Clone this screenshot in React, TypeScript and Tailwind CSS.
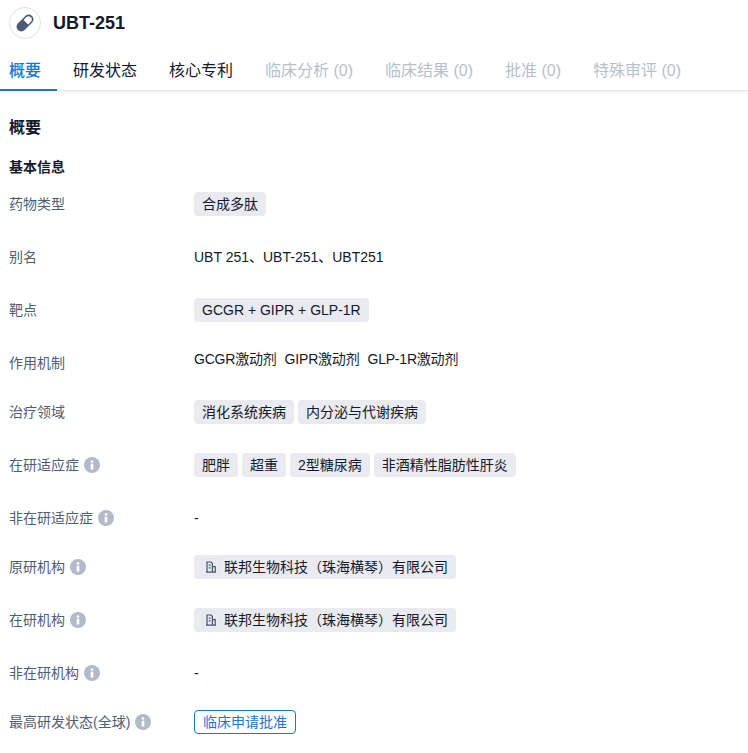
import React from 'react';

const FONT = "font-['Liberation_Sans','Noto_Sans_CJK_SC',sans-serif]";

const tabs = [
  { label: '概要', active: true },
  { label: '研发状态' },
  { label: '核心专利' },
  { label: '临床分析 (0)', disabled: true },
  { label: '临床结果 (0)', disabled: true },
  { label: '批准 (0)', disabled: true },
  { label: '特殊审评 (0)', disabled: true },
];

const InfoIcon = () => (
  <svg width="16" height="16" viewBox="0 0 16 16" className="shrink-0">
    <circle cx="8" cy="8" r="8" fill="#b3bac8" />
    <rect x="6.7" y="3.3" width="2.6" height="2.4" rx="1" fill="#fff" />
    <rect x="6.7" y="6.8" width="2.6" height="5.8" rx="0.6" fill="#fff" />
  </svg>
);

const PillIcon = () => (
  <svg width="20" height="20" viewBox="0 0 20 20">
    <g transform="rotate(-45 10 10)">
      <rect x="0" y="5.25" width="20" height="9.5" rx="4.75" fill="#4d5b78" />
      <path d="M11.2 6.8h3.9c1.8 0 3.2 1.4 3.2 3.2s-1.4 3.2-3.2 3.2h-3.9z" fill="#fff" />
    </g>
  </svg>
);

const BuildingIcon = () => (
  <span className="w-[18px] h-[18px] rounded-[3px] border border-[#e3e5eb] flex items-center justify-center shrink-0">
    <svg width="12" height="12" viewBox="0 0 12 12" fill="none" stroke="#44526e" strokeWidth="1.2">
      <path d="M2 11.2V1h4l1.4 1.4v8.8zM7.4 5.6h2.8v5.6H7.4M1 11.2h10M3.8 4.2h1.8M3.8 6.8h1.8" />
    </svg>
  </span>
);

const Tag = ({ children }: { children: React.ReactNode }) => (
  <span className="h-6 px-2 rounded bg-[#e9ebf0] text-[#14192b] text-sm leading-6 flex items-center gap-[4px] whitespace-nowrap">
    {children}
  </span>
);

const Row = ({
  label,
  info,
  h = 'h-[53px]',
  children,
}: {
  label: string;
  info?: boolean;
  h?: string;
  children: React.ReactNode;
}) => (
  <div className={`flex items-start ${h}`}>
    <div className="w-[185px] h-6 flex items-center gap-[5px] text-sm text-[#4e5d78]">
      <span>{label}</span>
      {info && <InfoIcon />}
    </div>
    <div className="flex items-center gap-1 text-sm text-[#14192b] h-6">{children}</div>
  </div>
);

export default function App() {
  return (
    <div className={`${FONT} w-[748px] h-[753px] overflow-hidden bg-white`}>
      {/* Header */}
      <div className="h-[46px] pl-[9px] pt-[7px] flex items-start gap-3">
        <div className="w-8 h-8 rounded-full border border-[#dfe2e9] flex items-center justify-center">
          <PillIcon />
        </div>
        <h1 className="text-lg font-bold text-[#14192b] leading-8">UBT-251</h1>
      </div>

      {/* Tabs */}
      <div className="h-[45px] pl-[9px] flex gap-8 border-b border-[#e3e5eb] shadow-[0_2px_4px_rgba(30,40,70,0.06)]">
        {tabs.map((t) => (
          <div
            key={t.label}
            className={`relative h-[45px] leading-[50px] text-base whitespace-nowrap ${
              t.active ? 'text-[#1976d2] font-medium' : t.disabled ? 'text-[#b8bfcc]' : 'text-[#14192b]'
            }`}
          >
            {t.label}
            {t.active && <span className="absolute left-[-9px] right-[-16px] bottom-0 h-[2px] bg-[#1976d2]" />}
          </div>
        ))}
      </div>

      <div className="pl-[9px]">
        <h2 className="mt-[25px] text-base font-semibold leading-6 text-[#14192b]">概要</h2>
        <h3 className="mt-[17px] mb-[15px] text-sm font-semibold leading-5 text-[#14192b]">基本信息</h3>

        <Row label="药物类型"><Tag>合成多肽</Tag></Row>
        <Row label="别名">UBT 251、UBT-251、UBT251</Row>
        <Row label="靶点"><Tag>GCGR + GIPR + GLP-1R</Tag></Row>
        <Row label="作用机制" h="h-[49px]">
          <span className="-mt-2 flex gap-2 tracking-[-0.2px]">
            <span>GCGR激动剂</span><span>GIPR激动剂</span><span>GLP-1R激动剂</span>
          </span>
        </Row>
        <Row label="治疗领域"><Tag>消化系统疾病</Tag><Tag>内分泌与代谢疾病</Tag></Row>
        <Row label="在研适应症" info>
          <Tag>肥胖</Tag><Tag>超重</Tag><Tag>2型糖尿病</Tag><Tag>非酒精性脂肪性肝炎</Tag>
        </Row>
        <Row label="非在研适应症" info h="h-[49px]">-</Row>
        <Row label="原研机构" info><Tag><BuildingIcon />联邦生物科技（珠海横琴）有限公司</Tag></Row>
        <Row label="在研机构" info><Tag><BuildingIcon />联邦生物科技（珠海横琴）有限公司</Tag></Row>
        <Row label="非在研机构" info h="h-[49px]">-</Row>
        <Row label="最高研发状态(全球)" info>
          <span className="h-6 px-2 rounded border border-[#1976d2] text-[#1976d2] text-sm flex items-center">临床申请批准</span>
        </Row>
      </div>
    </div>
  );
}
